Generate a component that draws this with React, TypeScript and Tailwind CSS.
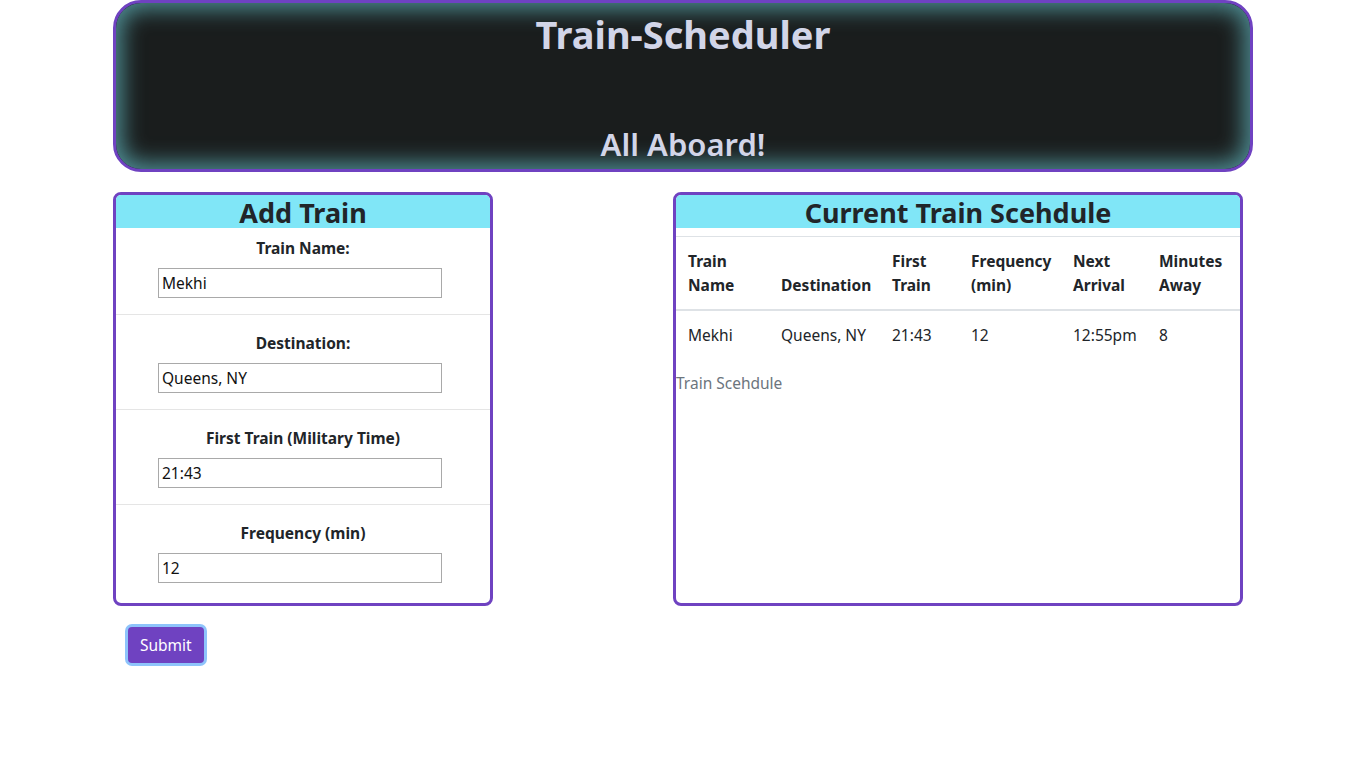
const trains = [
  {
    name: "Mekhi",
    destination: "Queens, NY",
    first: "21:43",
    frequency: "12",
    next: "12:55pm",
    away: "8",
  },
];

const fields = [
  { label: "Train Name:", value: "Mekhi" },
  { label: "Destination:", value: "Queens, NY" },
  { label: "First Train (Military Time)", value: "21:43" },
  { label: "Frequency (min)", value: "12" },
];

const FormGroup = ({
  label,
  value,
  isLast,
}: {
  label: string;
  value: string;
  isLast: boolean;
}) => {
  return (
    <div className={isLast ? "pb-5" : "pb-4 mb-4 border-b border-[#e5e5e5]"}>
      <label className="block text-center font-bold leading-6 mb-2 text-[15.5px]">
        {label}
      </label>
      <input
        defaultValue={value}
        className="block ml-[42px] w-[284px] h-[30px] px-[3px] border border-[#a9a9a9] text-[15.5px] text-[#111]"
      />
    </div>
  );
};

const AddTrain = () => {
  return (
    <section className="w-[380px] h-[414px] border-[3px] border-[#6f42c1] rounded-lg overflow-hidden">
      <h2 className="bg-[#80e6f7] text-[27px] font-bold leading-[31px] pt-[2px] text-center mb-2">
        Add Train
      </h2>
      <form>
        {fields.map((f, i) => (
          <FormGroup
            key={i}
            label={f.label}
            value={f.value}
            isLast={i === fields.length - 1}
          />
        ))}
      </form>
    </section>
  );
};

const Schedule = () => {
  return (
    <section className="w-[570px] h-[414px] border-[3px] border-[#6f42c1] rounded-lg overflow-hidden">
      <h2 className="bg-[#80e6f7] text-[27px] font-bold leading-[31px] pt-[2px] text-center mb-2">
        Current Train Scehdule
      </h2>
      <table className="w-full table-fixed border-collapse text-[15.5px]">
        <caption className="caption-bottom text-left text-[#6c757d] pt-3 leading-6">
          Train Scehdule
        </caption>
        <thead>
          <tr className="border-t border-[#dee2e6] border-b-2 border-b-[#dee2e6]">
            <th className="w-[93px] p-3 text-left align-bottom font-bold leading-6">
              Train Name
            </th>
            <th className="w-[111px] p-3 text-left align-bottom font-bold leading-6">
              Destination
            </th>
            <th className="w-[79px] p-3 text-left align-bottom font-bold leading-6">
              First Train
            </th>
            <th className="w-[102px] p-3 text-left align-bottom font-bold leading-6">
              Frequency (min)
            </th>
            <th className="w-[86px] p-3 text-left align-bottom font-bold leading-6">
              Next Arrival
            </th>
            <th className="w-[93px] p-3 text-left align-bottom font-bold leading-6">
              Minutes Away
            </th>
          </tr>
        </thead>
        <tbody>
          {trains.map((t, i) => (
            <tr key={i}>
              <td className="p-3 leading-6">{t.name}</td>
              <td className="p-3 leading-6 whitespace-nowrap">{t.destination}</td>
              <td className="p-3 leading-6">{t.first}</td>
              <td className="p-3 leading-6">{t.frequency}</td>
              <td className="p-3 leading-6">{t.next}</td>
              <td className="p-3 leading-6">{t.away}</td>
            </tr>
          ))}
        </tbody>
      </table>
    </section>
  );
};

export default function App() {
  return (
    <div className="min-h-screen bg-white text-[#212529] text-base font-['Noto_Sans',sans-serif]">
      <div className="w-[1140px] mx-auto">
        <header className="h-[172px] border-[3px] border-[#6f42c1] rounded-[28px] bg-[#1a1d1d] shadow-[inset_0_0_22px_6px_#4f8f95] flex flex-col items-center justify-between pt-[8px] pb-[6px] text-[#d2d5e8]">
          <h1 className="text-[38px] font-bold leading-[46px]">Train-Scheduler</h1>
          <h2 className="text-[31px] font-semibold leading-[37px]">All Aboard!</h2>
        </header>
        <div className="flex mt-5">
          <AddTrain />
          <div className="ml-[180px]">
            <Schedule />
          </div>
        </div>
        <div className="mt-[21px] ml-[15px]">
          <button className="h-[36px] px-3 rounded bg-[#6f42c1] text-white text-[15.5px] leading-6 ring-[3px] ring-[#8ec4fb]">
            Submit
          </button>
        </div>
      </div>
    </div>
  );
}
